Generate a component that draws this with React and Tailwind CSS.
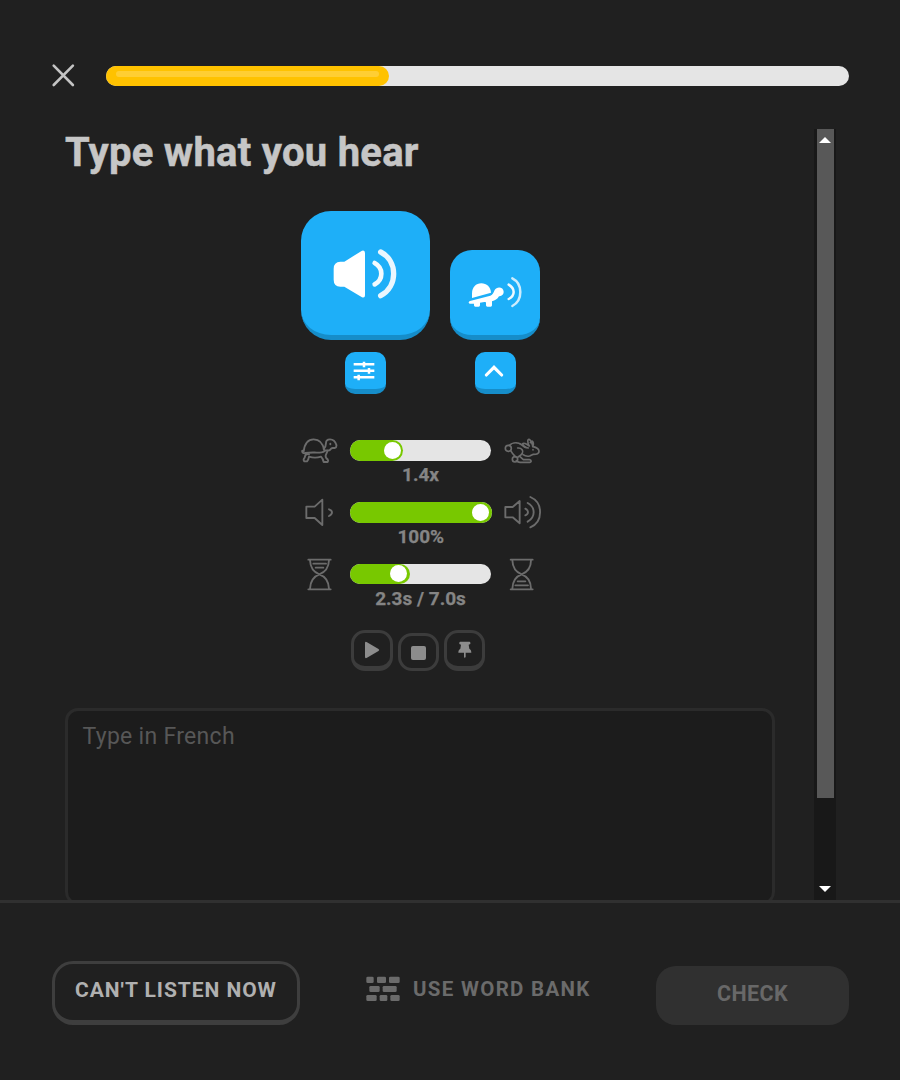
import React from "react";

const Close = () => (
  <svg width="24" height="24" viewBox="0 0 24 24" fill="none" stroke="#c4c4c4" strokeWidth="2.6" strokeLinecap="round">
    <path d="M2.7 2.6 21.9 22M21.9 2.6 2.7 22" />
  </svg>
);

const SpeakerFilled = () => (
  <svg width="66" height="50" viewBox="129 145 198 150" fill="none">
    <path d="M131 204Q131 184 151 183H163L216 150Q225 147 225 157V284Q225 293 216 290L163 258H151Q131 257 131 237Z" fill="#fff" />
    <path d="M254 187Q274 198 274 219Q274 240 254 251" stroke="#f3fafe" strokeWidth="14" strokeLinecap="round" />
    <path d="M272 154C324 180 324 258 272 285" stroke="#eaf6fe" strokeWidth="16" strokeLinecap="round" />
  </svg>
);

const TurtleFilled = () => (
  <svg width="54" height="32" viewBox="534 228 162 96" fill="none">
    <path d="M546 294V280C546 262 558 250 574 250C590 250 602 261 603 278Z" fill="#fff" />
    <path d="M540 303L601 287C609 285 610 278 614 270C620 258 641 260 641 275C641 287 632 287 627 289C622 298 615 302 606 304V316Q606 320 602 320H592Q588 320 588 316V307L583 306L570 308V316Q570 320 566 320H556Q552 320 552 316V311L539 311C534 309 536 304 540 303Z" fill="#fff" />
    <path d="M656 254Q671 263 671 276Q671 289 656 297" stroke="#f0f9fe" strokeWidth="7.5" strokeLinecap="round" />
    <path d="M667 235C699 251 699 301 667 318" stroke="#cdecfd" strokeWidth="7.5" strokeLinecap="round" />
  </svg>
);

const Sliders = () => (
  <svg width="22" height="20" viewBox="190 482 66 60" stroke="#fff" strokeWidth="7.5">
    <path d="M192 492H254M192 511H254M192 531H254" />
    <path d="M223 484V501M238 503V520M207 523V540" />
  </svg>
);

const Chevron = () => (
  <svg width="20" height="14" viewBox="582 491 60 42" fill="none" stroke="#fff" strokeWidth="9.5" strokeLinecap="round">
    <path d="M589 524L612 501L635 524" />
  </svg>
);

const Line = ({ w, h, box, sw = 5.6, children }) => (
  <svg width={w} height={h} viewBox={box} fill="none" stroke="#6c6c6c" strokeWidth={sw} strokeLinecap="round" strokeLinejoin="round">
    {children}
  </svg>
);

const Turtle = () => (
  <Line w="37" h="26" box="33 39 111 78">
    <path d="M41 79C44 55 56 43 71 43C87 43 99 55 103 76" />
    <path d="M37 77C35 83 40 85 46 84C62 81 82 84 95 82C103 81 104 77 107 76H118C124 73 121 70 128 69H134C139 68 140 64 139 59C136 49 129 43 120 43C112 43 108 48 108 54C108 63 106 67 101 72" />
    <path d="M46 91Q51 85 57 88M48 85Q45 93 44 98C40 101 40 106 43 109H51Q56 103 57 95Q75 101 93 95Q99 101 101 111H113Q116 107 113 103Q106 99 107 91L113 77" />
    <path d="M121 56V58" />
  </Line>
);

const Rabbit = () => (
  <Line w="37" h="26" box="252 38 111 78" sw={5}>
    <circle cx="265" cy="69" r="9" />
    <path d="M268 60C275 53 288 51 297 54C306 56 309 64 316 66M272 76C277 85 280 88 286 94M293 68C306 67 311 77 307 84C303 90 300 91 294 95M300 94L310 103H328C335 104 335 111 329 111H300C294 111 291 108 289 106" />
    <circle cx="285" cy="102" r="8" />
    <path d="M309 88C316 93 321 94 329 92L340 87C350 87 358 85 357 77C356 69 348 66 339 64C336 54 332 44 327 42C322 42 322 52 328 62C319 55 310 52 308 55C308 61 317 67 325 68M338 64C342 56 340 49 336 47L331 52" />
    <path d="M339 73V74" />
  </Line>
);

const Quiet = () => (
  <Line w="29" h="29" box="47 218 87 87">
    <path d="M51 244H76L99 223V299L76 278H51Z" />
    <path d="M119 252Q128 255 128 261Q128 268 119 272" />
  </Line>
);

const Loud = () => (
  <Line w="38" h="34" box="251 211 114 102">
    <path d="M255 247H277L298 229V296L277 278H255Z" />
    <path d="M315 252Q323 256 323 262Q323 269 315 272M322 235C346 248 346 277 322 291M330 217C369 234 369 291 330 308" />
  </Line>
);

const HourglassTop = () => (
  <Line w="26" h="33" box="50 397 78 99">
    <path d="M54 402H121M54 491H121M59 404C60 427 71 440 87 446C104 452 115 465 116 489M116 404C115 427 104 440 87 446C71 452 60 465 59 489M69 414H107M76 426H99" />
  </Line>
);

const HourglassBottom = () => (
  <Line w="26" h="33" box="269 397 78 99">
    <path d="M274 402H340M274 491H340M279 404C280 427 290 440 307 446C323 452 335 465 335 489M335 404C335 427 323 440 307 446C290 452 280 465 279 489M295 467H318M288 479H326" />
  </Line>
);

const Bricks = () => (
  <svg width="34" height="26" viewBox="50 110 102 78" fill="#6b6b6b">
    <rect x="51" y="112" width="22" height="19" rx="4" />
    <rect x="83" y="112" width="27" height="19" rx="4" />
    <rect x="119" y="112" width="32" height="19" rx="4" />
    <rect x="60" y="140" width="31" height="18" rx="4" />
    <rect x="100" y="140" width="42" height="18" rx="4" />
    <rect x="51" y="167" width="31" height="18" rx="4" />
    <rect x="91" y="167" width="23" height="18" rx="4" />
    <rect x="123" y="167" width="28" height="18" rx="4" />
  </svg>
);

const Level = ({ value, label, left, right }) => (
  <div className="flex h-[61.7px] items-start">
    <div className="flex h-[37px] w-[37px] shrink-0 items-center justify-center">{left}</div>
    <div className="ml-[12px] flex w-[141.5px] flex-col items-center pt-[8px]">
      <div className="h-[20.7px] w-full rounded-full bg-[#e5e5e5]">
        <div className="flex h-full items-center justify-end rounded-full bg-[#78c800] pr-[2.5px]" style={{ width: value }}>
          <div className="h-[17px] w-[17px] rounded-full bg-white" />
        </div>
      </div>
      <div className="mt-[2.5px] whitespace-nowrap text-[19px] leading-[24px] font-bold text-[#858585] [-webkit-text-stroke:0.25px_#858585]">{label}</div>
    </div>
    <div className="ml-[12px] flex h-[37px] w-[38px] shrink-0 items-center justify-center">{right}</div>
  </div>
);

export default function App() {
  return (
    <div className="flex h-[1080px] w-[900px] flex-col overflow-hidden bg-[#202020] font-['Roboto',sans-serif]">
      <header className="flex h-[129px] shrink-0 items-start pt-[63px] pl-[51px]">
        <Close />
        <div className="mt-[2.7px] ml-[31px] h-[20.7px] w-[743px] rounded-full bg-[#e5e5e5]">
          <div className="h-full w-[282.5px] rounded-full bg-[#ffc200] px-[10px] pt-[5px]">
            <div className="h-[6.5px] rounded-full bg-[#ffce33]" />
          </div>
        </div>
      </header>

      <div className="flex h-[771px] shrink-0 overflow-hidden pl-[65px]">
        <main className="h-[776px] w-[710px] shrink-0">
          <h1 className="h-[82px] whitespace-nowrap text-[40px] leading-[47px] font-bold tracking-[0.27px] text-[#c6c6c6] [-webkit-text-stroke:0.5px_#c6c6c6]">Type what you hear</h1>
          <div className="ml-[236px] w-[240px]">
            <div className="flex items-end gap-[20px]">
              <button className="flex h-[129px] w-[129px] items-center justify-center rounded-[30px] border-b-[5px] border-[#168dc9] bg-[#1eaff8] pt-[1px] pl-[1px]">
                <SpeakerFilled />
              </button>
              <button className="flex h-[90px] w-[90.4px] items-center justify-center rounded-[22px] border-b-[5px] border-[#168dc9] bg-[#1eaff8] pb-[1px]">
                <TurtleFilled />
              </button>
            </div>
            <div className="mt-[12px] flex">
              <button className="ml-[44px] flex h-[42px] w-[41px] items-center justify-center rounded-[10px] border-b-[5px] border-[#168dc9] bg-[#1eaff8] pr-[3px]">
                <Sliders />
              </button>
              <button className="ml-[89px] flex h-[42px] w-[41px] items-center justify-center rounded-[10px] border-b-[5px] border-[#168dc9] bg-[#1eaff8] pr-[3px]">
                <Chevron />
              </button>
            </div>
            <div className="mt-[38.2px]">
              <Level value="53px" label="1.4x" left={<Turtle />} right={<Rabbit />} />
              <Level value="141.5px" label="100%" left={<Quiet />} right={<Loud />} />
              <Level value="59.5px" label="2.3s / 7.0s" left={<HourglassTop />} right={<HourglassBottom />} />
            </div>
            <div className="mt-[12.7px] ml-[50px] flex h-[78px] items-start gap-[5px]">
              <button className="flex h-[41px] w-[41.5px] items-center justify-center rounded-[14px] border-[3px] border-b-[5px] border-[#3c3c3c] pt-[1px]">
                <svg width="16" height="18" viewBox="0 0 16 18"><path d="M1 2.2Q1 0 3 1.2L14.5 8Q16 9 14.5 10L3 16.8Q1 18 1 15.8Z" fill="#8c8c8c" /></svg>
              </button>
              <button className="mt-[3px] flex h-[38px] w-[41.5px] items-center justify-center rounded-[14px] border-[3px] border-[#3c3c3c]">
                <span className="mt-[2px] h-[14.5px] w-[14.5px] rounded-[2px] bg-[#8c8c8c]" />
              </button>
              <button className="flex h-[41px] w-[41px] items-center justify-center rounded-[14px] border-[3px] border-b-[5px] border-[#3c3c3c] pt-[1px]">
                <svg width="14" height="18" viewBox="353 184 42 54" fill="#8c8c8c"><path d="M360 186H387Q390 186 390 189V193L385 195L387 207C391 209 393 213 393 219H376V231L373.5 236L371 231V219H354C354 213 356 209 360 207L362 195L357 193V189Q357 186 360 186Z" /></svg>
              </button>
            </div>
          </div>
          <div className="h-[197px] w-[710px] rounded-[13px] border-[3px] border-[#2b2b2b] bg-[#1c1c1c] pt-[10px] pl-[14.5px] text-[23px] leading-[31px] tracking-[0.3px] text-[#575757]">
            Type in French
          </div>
        </main>
        <div className="ml-[39px] flex w-[22px] flex-col items-center bg-[#181818]">
          <div className="flex h-[669px] w-[17px] flex-col items-center bg-[#585858] pt-[8px]">
            <svg width="12" height="6" viewBox="0 0 12 6"><path d="M0 6 6 0 12 6Z" fill="#fff" /></svg>
          </div>
          <svg className="mt-[88px]" width="12" height="6" viewBox="0 0 12 6"><path d="M0 0H12L6 6Z" fill="#fff" /></svg>
        </div>
      </div>

      <footer className="flex flex-1 items-start border-t-[3px] border-[#303030] pl-[52px]">
        <button className="mt-[58px] flex h-[64px] w-[248px] justify-center rounded-[21px] border-[3px] border-b-[5px] border-[#3e3e3e] pt-[14px]">
          <span className="whitespace-nowrap text-[21px] leading-[24px] font-bold tracking-[0.95px] text-[#b0b0b0]">CAN'T LISTEN NOW</span>
        </button>
        <button className="mt-[73px] ml-[66px] flex items-start">
          <Bricks />
          <span className="ml-[13px] whitespace-nowrap text-[20.5px] leading-[26px] font-bold tracking-[1.3px] text-[#6b6b6b]">USE WORD BANK</span>
        </button>
        <button className="mt-[63px] ml-auto mr-[51px] flex h-[59px] w-[193px] justify-center rounded-[20px] bg-[#303030] pt-[16px]">
          <span className="text-[21.5px] leading-[24px] font-bold tracking-[0.4px] text-[#686868]">CHECK</span>
        </button>
      </footer>
    </div>
  );
}
